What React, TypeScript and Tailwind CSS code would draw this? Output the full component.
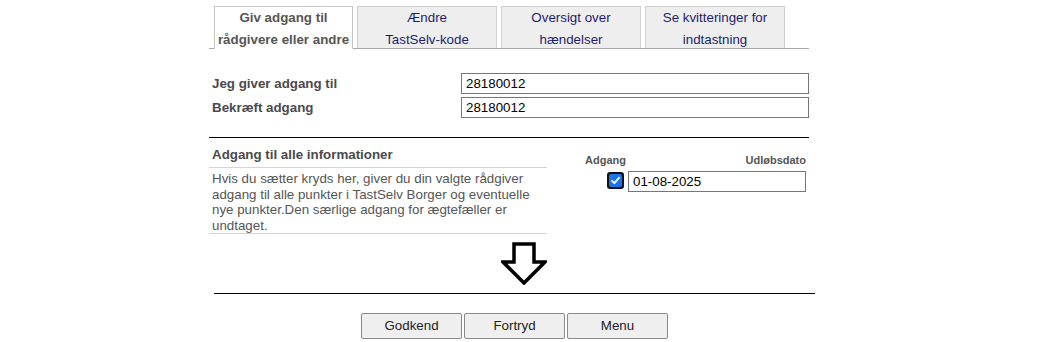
import React from "react";

const font = { fontFamily: '"Liberation Sans", Arial, sans-serif' };

function Tab({ lines, active }: { lines: string[]; active?: boolean }) {
  return (
    <div
      className={
        active
          ? "w-[139px] h-[43px] -mb-px bg-white border border-[#c4c4c4] border-b-white flex flex-col items-center pt-[0px] text-[13.33px] leading-[22px] font-bold text-[#555555]"
          : "w-[140px] h-[42px] bg-[#eeeeee] border border-b-0 border-[#cfcfcf] flex flex-col items-center pt-[0px] text-[13.33px] leading-[22px] text-[#1d1d6e]"
      }
    >
      {lines.map((l) => (
        <span key={l} className="whitespace-nowrap">{l}</span>
      ))}
    </div>
  );
}

function Checkbox() {
  return (
    <div className="w-[17px] h-[17px] rounded-[3px] bg-[#111] flex items-center justify-center">
      <div className="w-[13px] h-[13px] rounded-[2px] bg-[#1a73e8] flex items-center justify-center">
        <svg width="11" height="11" viewBox="0 0 11 11">
          <path d="M2 5.8 L4.4 8.2 L9 2.8" fill="none" stroke="white" strokeWidth="1.8" strokeLinecap="round" strokeLinejoin="round" />
        </svg>
      </div>
    </div>
  );
}

export default function App() {
  return (
    <div className="w-[1038px] h-[342px] bg-white overflow-hidden" style={font}>
      <div className="ml-[209px] w-[600px] pt-[6px]">
        {/* Tabs */}
        <div className="flex gap-[4px] pl-[5px] border-b border-[#a8a8a8] items-end">
          <Tab active lines={["Giv adgang til", "rådgivere eller andre"]} />
          <Tab lines={["Ændre", "TastSelv-kode"]} />
          <Tab lines={["Oversigt over", "hændelser"]} />
          <Tab lines={["Se kvitteringer for", "indtastning"]} />
        </div>

        {/* Form rows */}
        <div className="mt-[24px] flex flex-col gap-[3px]">
          <div className="flex items-center h-[21px]">
            <div className="w-[252px] pl-[3px] text-[13.33px] font-bold text-[#4a4a4a]">Jeg giver adgang til</div>
            <input
              readOnly
              value="28180012"
              className="w-[348px] h-[21px] border border-[#767676] px-[4px] text-[13.33px] text-black outline-none"
              style={font}
            />
          </div>
          <div className="flex items-center h-[21px]">
            <div className="w-[252px] pl-[3px] text-[13.33px] font-bold text-[#4a4a4a]">Bekræft adgang</div>
            <input
              readOnly
              value="28180012"
              className="w-[348px] h-[21px] border border-[#767676] px-[4px] text-[13.33px] text-black outline-none"
              style={font}
            />
          </div>
        </div>

        <div className="mt-[19px] border-t border-black" />

        {/* Section */}
        <div className="flex">
          <div className="w-[338px]">
            <div className="h-[30px] pl-[3px] pt-[7px] text-[13.33px] font-bold text-[#4a4a4a] border-b border-[#d4d4d4]">
              Adgang til alle informationer
            </div>
            <div className="pl-[3px] pt-[3px] text-[13.33px] leading-[15.5px] text-[#555555] border-b border-[#d4d4d4]">
              Hvis du sætter kryds her, giver du din valgte rådgiver adgang til alle punkter i TastSelv Borger og eventuelle nye punkter.Den særlige adgang for ægtefæller er undtaget.
            </div>
          </div>
          <div className="w-[259px] flex flex-col">
            <div className="flex justify-between items-end h-[30px] pl-[38px] text-[11px] font-bold text-[#555555]">
              <span>Adgang</span>
              <span>Udløbsdato</span>
            </div>
            <div className="flex items-start mt-[3px] pl-[60px] gap-[4px]">
              <div className="pt-[1px]">
                <Checkbox />
              </div>
              <input
                readOnly
                value="01-08-2025"
                className="w-[178px] h-[21px] border border-[#767676] px-[4px] text-[13.33px] text-black outline-none"
                style={font}
              />
            </div>
          </div>
        </div>

        {/* Arrow */}
        <div className="flex pl-[292px] mt-[8px]">
          <svg width="46" height="43" viewBox="0 0 46 43">
            <polygon
              points="13,2 33,2 33,20 44,20 23,41 2,20 13,20"
              fill="white"
              stroke="black"
              strokeWidth="3.5"
              strokeLinejoin="miter"
            />
          </svg>
        </div>
      </div>

      <div className="ml-[214px] w-[601px] mt-[8px] border-t border-black" />

      <div className="flex ml-[361px] mt-[19px] gap-[2px]">
        {["Godkend", "Fortryd", "Menu"].map((b) => (
          <button
            key={b}
            className="w-[101px] h-[26px] bg-[#efefef] border border-[#8a8a8a] rounded-[2px] text-[13.33px] text-[#222]"
            style={font}
          >
            {b}
          </button>
        ))}
      </div>
    </div>
  );
}
